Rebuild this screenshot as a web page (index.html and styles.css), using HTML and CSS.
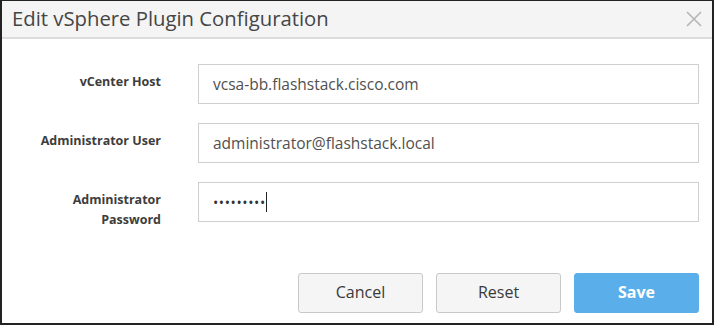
FILE: index.html
```html
<!DOCTYPE html>
<html>
<head>
<meta charset="utf-8">
<link rel="stylesheet" href="styles.css">
</head>
<body>
<div class="dialog">
  <div class="header">
    <h1 class="title">Edit vSphere Plugin Configuration</h1>
    <button class="close" aria-label="Close">
      <svg width="16" height="16" viewBox="0 0 16 16"><path d="M1 1 L15 15 M15 1 L1 15" stroke="#b5b5b5" stroke-width="1.6" fill="none"/></svg>
    </button>
  </div>
  <div class="body">
    <div class="row">
      <label class="label">vCenter Host</label>
      <div class="input">vcsa-bb.flashstack.cisco.com</div>
    </div>
    <div class="row">
      <label class="label">Administrator User</label>
      <div class="input">administrator@flashstack.local</div>
    </div>
    <div class="row">
      <label class="label">Administrator<br>Password</label>
      <div class="input pw"><span class="dots">•••••••••</span><span class="caret"></span></div>
    </div>
  </div>
  <div class="footer">
    <button class="btn">Cancel</button>
    <button class="btn">Reset</button>
    <button class="btn primary">Save</button>
  </div>
</div>
</body>
</html>
```

FILE: styles.css
```css
html, body {
  margin: 0;
  padding: 0;
  background: #fff;
}
.dialog {
  box-sizing: border-box;
  width: 714px;
  height: 325px;
  border-top: 1px solid #222;
  border-left: 2px solid #222;
  border-right: 2px solid #222;
  border-bottom: 2px solid #222;
  font-family: "Open Sans", "Liberation Sans", sans-serif;
  display: flex;
  flex-direction: column;
  background: #fff;
}
.header {
  box-sizing: border-box;
  height: 38px;
  background: #f4f4f4;
  border-bottom: 2px solid #dcdcdc;
  display: flex;
  align-items: center;
  justify-content: space-between;
  padding: 0 10px 3px 10px;
}
.title {
  margin: 0;
  font-size: 20.3px;
  font-weight: 400;
  color: #454545;
}
.close {
  border: 0;
  background: none;
  padding: 0;
  width: 16px;
  height: 16px;
  display: flex;
  margin-top: 2px;
}
.body {
  padding: 25px 13px 0 0;
  display: flex;
  flex-direction: column;
  gap: 19px;
}
.row {
  display: grid;
  grid-template-columns: 159px 1fr;
  column-gap: 37px;
  align-items: start;
}
.label {
  text-align: right;
  font-size: 12.5px;
  font-weight: 700;
  color: #3d3d3d;
  line-height: 20px;
  padding-top: 8px;
}
.input {
  box-sizing: border-box;
  height: 40px;
  border: 1px solid #cfcfcf;
  padding: 0 14px;
  display: flex;
  align-items: center;
  font-size: 15.5px;
  color: #505050;
}
.dots {
  font-size: 14px;
  letter-spacing: 0.6px;
  color: #333;
}
.caret {
  display: inline-block;
  width: 1px;
  height: 20px;
  background: #222;
  margin-left: 0;
}
.footer {
  margin-top: auto;
  padding: 0 13px 10px 0;
  display: flex;
  justify-content: flex-end;
  gap: 13px;
}
.btn {
  box-sizing: border-box;
  width: 125px;
  height: 40px;
  border: 1px solid #c9c9c9;
  border-radius: 3px;
  background: #f5f5f5;
  font-family: "Open Sans", "Liberation Sans", sans-serif;
  font-size: 16px;
  color: #3a3a3a;
  padding: 0 0 2px 0;
}
.btn.primary {
  background: #5aaee9;
  border-color: #5aaee9;
  color: #fff;
  font-weight: 700;
}
```
